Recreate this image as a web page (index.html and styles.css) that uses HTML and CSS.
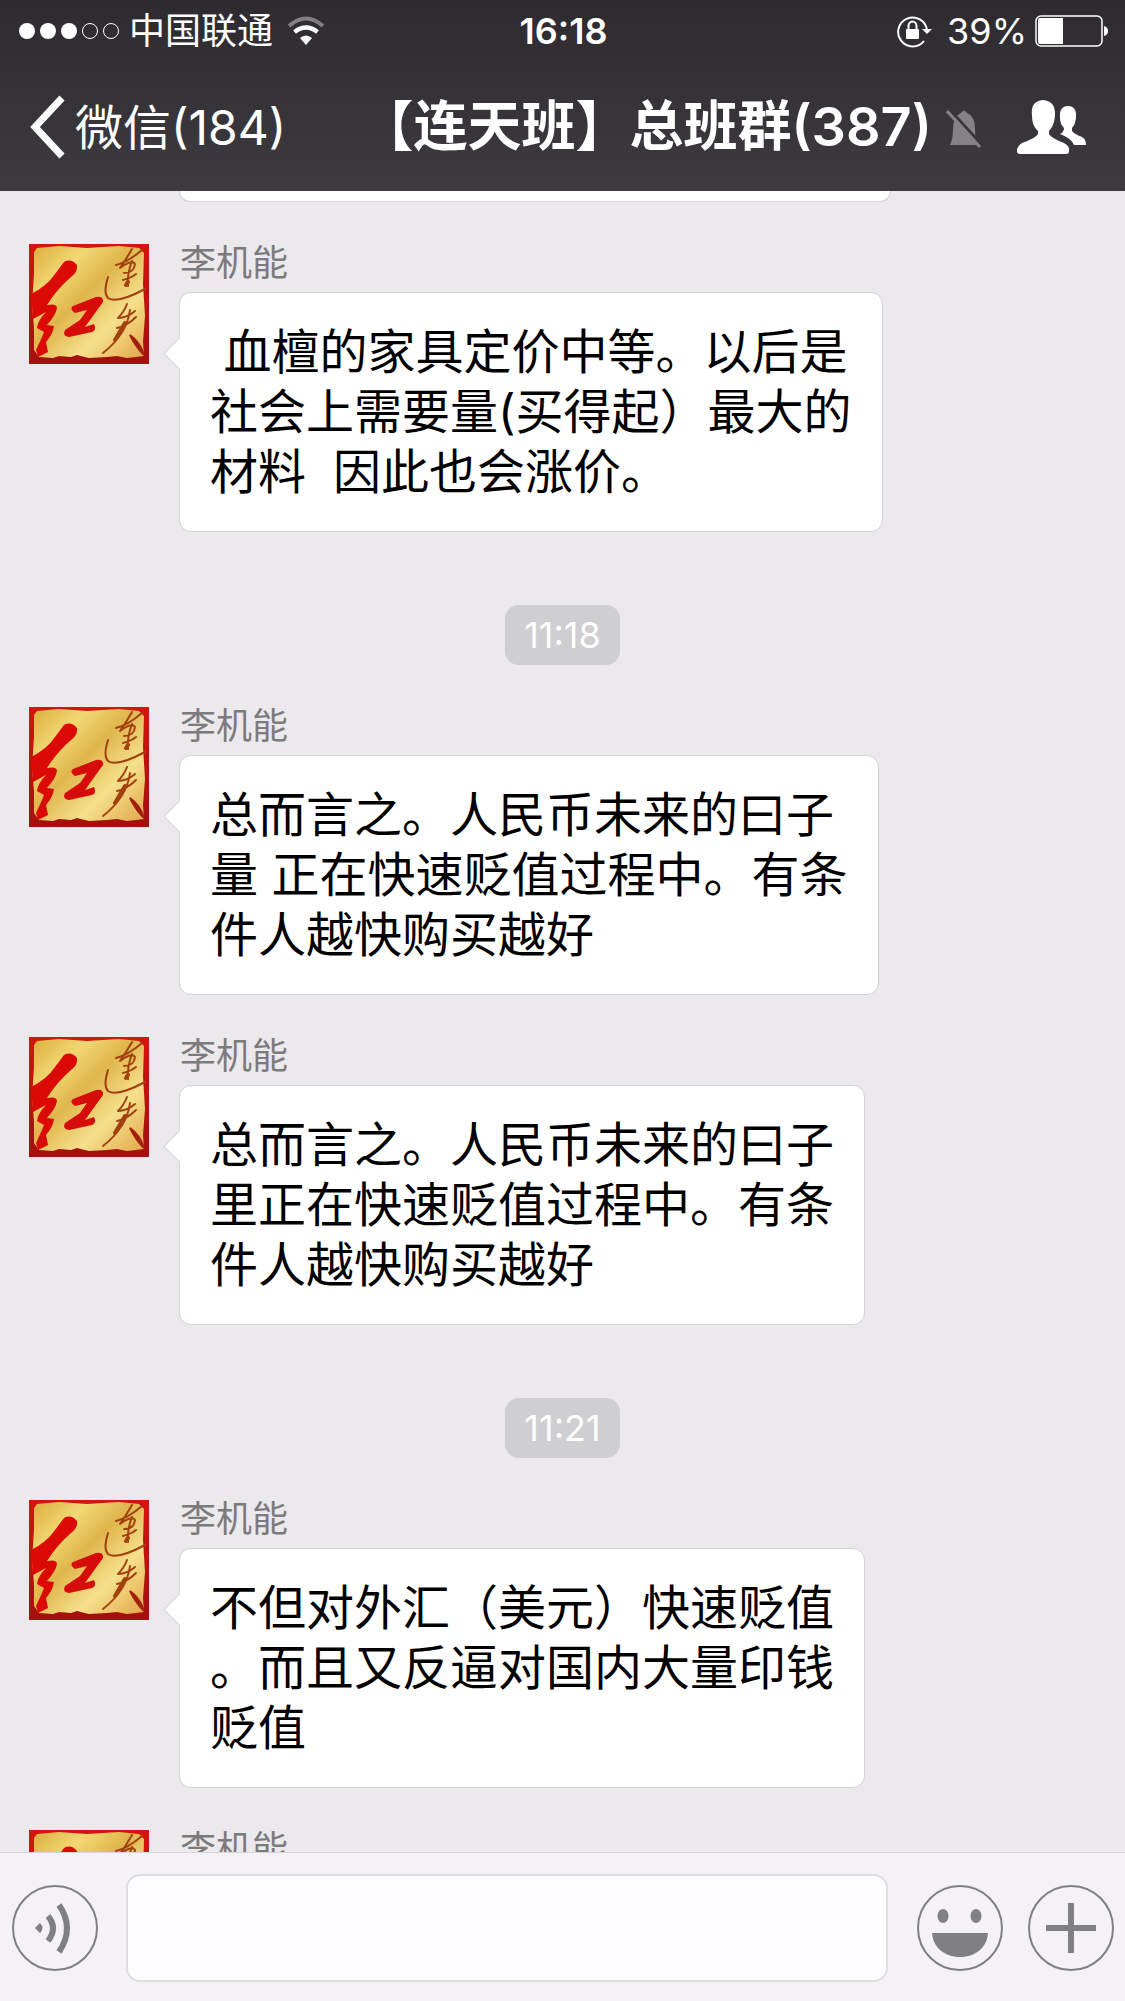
FILE: index.html
```html
<!DOCTYPE html>
<html lang="zh-CN">
<head>
<meta charset="utf-8">
<meta name="viewport" content="width=device-width, initial-scale=1">
<title>【连天班】总班群(387)</title>
<link rel="stylesheet" href="styles.css">
</head>
<body>
<svg class="sprite" aria-hidden="true">
  <defs>
    <linearGradient id="gold" x1="0" y1="0" x2="1" y2="1">
      <stop offset="0" stop-color="#dcae3c"/>
      <stop offset="0.25" stop-color="#f1d873"/>
      <stop offset="0.45" stop-color="#e0b64c"/>
      <stop offset="0.7" stop-color="#f5e08c"/>
      <stop offset="1" stop-color="#e2a648"/>
    </linearGradient>
    <linearGradient id="frame" x1="0" y1="0" x2="0" y2="1">
      <stop offset="0" stop-color="#d5150f"/>
      <stop offset="1" stop-color="#a3100d"/>
    </linearGradient>
  </defs>
  <symbol id="avatar" viewBox="0 0 120 120">
    <rect width="120" height="120" fill="url(#frame)"/>
    <path d="M8 4 L30 2 L58 4 L90 2 L110 4 L115 9 L114 40 L116 72 L114 98 L115 112 L98 114 L88 112 L78 113 L60 114 L48 111 L42 113 L30 112 L24 114 L10 113 L5 106 L5 84 L3 60 L5 30 L5 8Z" fill="url(#gold)"/>
    <path d="M35 18 Q42 14 48 21 Q49 28 42 33 Q28 45 18 61 Q28 59 28 64 Q27 71 18 81 L25 82 Q24 90 17 98 L19 108 L9 113 L7 106 L13 93 L15 88 L8 84 Q9 76 17 68 L4 75 L2 50 Q18 42 26 30Z" fill="#dc0a07"/>
    <path d="M44 62 L67 53 Q75 52 74 58 L56 83 L65 80 Q68 86 63 88 L40 93 Q33 92 36 86 L51 76 L58 66 L46 69 Q40 65 44 62Z" fill="#d50c09"/>
    <g fill="none" stroke="#a2410f" stroke-linecap="round" stroke-linejoin="round">
      <path d="M87 21 Q99 18 113 6 M103 5 Q96 17 91 24 Q103 15 106 20 Q105 29 95 29 M94 36 Q102 34 107 30 M103 17 Q98 30 99 42" stroke-width="2"/>
      <path d="M79 33 Q74 49 79 54 Q88 60 116 45" stroke-width="2"/>
      <path d="M98 60 Q95 68 89 74 Q98 74 106 67 M88 84 Q98 82 107 73 M101 66 Q98 90 74 109" stroke-width="2"/>
      <path d="M97 41 L99 38 M96 79 L86 96" stroke-width="4"/>
    </g>
    <path d="M101 91 Q111 98 115 111 Q107 103 101 91Z" fill="#a0200d" stroke="#a0200d" stroke-width="2"/>
  </symbol>
</svg>

<header class="header">
  <div class="status">
    <div class="status-side">
      <svg class="signal" viewBox="0 0 102 18" aria-hidden="true">
        <g fill="#fff"><circle cx="9" cy="9" r="8"/><circle cx="30" cy="9" r="8"/><circle cx="51" cy="9" r="8"/></g>
        <g fill="none" stroke="#fff"><circle cx="72" cy="9" r="7.5"/><circle cx="93" cy="9" r="7.5"/></g>
      </svg>
      <span class="carrier">中国联通</span>
      <svg class="wifi" viewBox="0 0 38 30" aria-hidden="true">
        <path d="M2 10 Q19 -5 36 10" fill="none" stroke="#817e84" stroke-width="4"/>
        <path d="M7.500 16 Q19 7 30.500 16" fill="none" stroke="#fff" stroke-width="4.500"/>
        <path d="M13 22 Q19 17 25 22 L19 29Z" fill="#fff"/>
      </svg>
    </div>
    <time class="clock">16:18</time>
    <div class="status-side status-right">
      <svg class="lock" viewBox="0 0 36 34" aria-hidden="true">
        <path d="M30 16 A14.500 14.500 0 1 0 27 27" fill="none" stroke="#fff" stroke-width="2"/>
        <path d="M25 15 H35 L30 20Z" fill="#fff"/>
        <rect x="9" y="15" width="13" height="10" rx="1" fill="#fff"/>
        <path d="M11.500 16 V12 A4 4.500 0 0 1 19.500 12 V16" fill="none" stroke="#fff" stroke-width="2"/>
      </svg>
      <span>39%</span>
      <svg class="battery" viewBox="0 0 74 32" aria-hidden="true">
        <rect x="1" y="1" width="66" height="30" rx="5" fill="none" stroke="#fff" stroke-width="1.500"/>
        <path d="M5 3 H28 V29 H5 Q3 29 3 27 V5 Q3 3 5 3Z" fill="#fff"/>
        <path d="M69 11 Q73 12 73 16 T69 21Z" fill="#fff"/>
      </svg>
    </div>
  </div>
  <nav class="nav">
    <a class="back" href="#">
      <svg class="chevron" viewBox="0 0 36 64" aria-hidden="true"><path d="M33 3 L6 32 L33 61" fill="none" stroke="#fff" stroke-width="7"/></svg>
      <span class="back-label">微信(184)</span>
    </a>
    <div class="heading">
      <h1 class="title">【连天班】总班群(387)</h1>
      <svg class="bell" viewBox="0 0 36 40" aria-label="消息免打扰">
        <path d="M4 36 Q7 30 7 20 Q7 7 15 4 Q18 -1 21 4 Q29 7 29 20 Q29 31 32 36Z" fill="#858287"/>
        <path d="M3 0 L36 36" stroke="#39363b" stroke-width="3"/>
        <path d="M1 2 L34 38" stroke="#858287" stroke-width="3"/>
      </svg>
    </div>
    <button class="members" type="button" aria-label="群成员">
      <svg viewBox="0 0 70 54" aria-hidden="true"><g fill="#fff">
        <path d="M51 6 Q60 6 59 18 Q58 25 55 28 V31 Q57 34 65 37 Q69 39 69 45 H57 Q54 38 43 34 Q47 32 47 28 Q43 24 43 18 Q42 6 51 6Z"/>
        <path d="M26 0 Q39 1 38 16 Q37 26 32 31 V34 Q34 38 47 43 Q53 46 52 51 Q52 54 49 54 H3 Q0 54 0 51 Q0 46 5 43 Q19 38 21 34 V31 Q15 26 15 16 Q13 1 26 0Z"/>
      </g></svg>
    </button>
  </nav>
</header>

<main class="chat">
  <div class="bubble bubble-cut"></div>

  <article class="message">
    <svg class="avatar" aria-hidden="true"><use href="#avatar"/></svg>
    <div class="content">
      <div class="name">李机能</div>
      <p class="bubble bubble-tail"> 血檀的家具定价中等。以后是<br>社会上需要量(买得起）最大的<br>材料  因此也会涨价。</p>
    </div>
  </article>

  <time class="stamp">11:18</time>

  <article class="message">
    <svg class="avatar" aria-hidden="true"><use href="#avatar"/></svg>
    <div class="content">
      <div class="name">李机能</div>
      <p class="bubble bubble-tail">总而言之。人民币未来的曰子<br>量 正在快速贬值过程中。有条<br>件人越快购买越好</p>
    </div>
  </article>

  <article class="message">
    <svg class="avatar" aria-hidden="true"><use href="#avatar"/></svg>
    <div class="content">
      <div class="name">李机能</div>
      <p class="bubble bubble-tail">总而言之。人民币未来的曰子<br>里正在快速贬值过程中。有条<br>件人越快购买越好</p>
    </div>
  </article>

  <time class="stamp">11:21</time>

  <article class="message">
    <svg class="avatar" aria-hidden="true"><use href="#avatar"/></svg>
    <div class="content">
      <div class="name">李机能</div>
      <p class="bubble bubble-tail">不但对外汇（美元）快速贬值<br>。而且又反逼对国内大量印钱<br>贬值</p>
    </div>
  </article>

  <article class="message">
    <svg class="avatar" aria-hidden="true"><use href="#avatar"/></svg>
    <div class="content">
      <div class="name">李机能</div>
    </div>
  </article>
</main>

<footer class="composer">
  <button class="tool" type="button" aria-label="语音">
    <svg viewBox="0 0 86 86" aria-hidden="true">
      <circle cx="43" cy="43" r="42" fill="none" stroke="#808084" stroke-width="2"/>
      <path d="M23 43 L28 38 Q33 43 28 48Z" fill="#808084"/>
      <path d="M36 31 Q46 43 36 56 M47 20 Q63 43 47 67" fill="none" stroke="#808084" stroke-width="6"/>
    </svg>
  </button>
  <input class="field" type="text" aria-label="消息">
  <button class="tool" type="button" aria-label="表情">
    <svg viewBox="0 0 86 86" aria-hidden="true">
      <circle cx="43" cy="43" r="42" fill="none" stroke="#808084" stroke-width="2"/>
      <g fill="#808084"><ellipse cx="26" cy="31" rx="5.500" ry="7"/><ellipse cx="59" cy="31" rx="5.500" ry="7"/>
      <path d="M15 48 H71 C70 62 59 72 43 72 S16 62 15 48Z"/></g>
    </svg>
  </button>
  <button class="tool" type="button" aria-label="更多">
    <svg viewBox="0 0 86 86" aria-hidden="true">
      <circle cx="43" cy="43" r="42" fill="none" stroke="#808084" stroke-width="2"/>
      <path d="M43 18 V68 M18 43 H68" stroke="#808084" stroke-width="6"/>
    </svg>
  </button>
</footer>
</body>
</html>
```
FILE: styles.css
```css
* { box-sizing: border-box; }

body {
  margin: 0;
  height: 100vh;
  display: flex;
  flex-direction: column;
  overflow: hidden;
  background: #ebe9ec;
  color: #000;
  font-family: Inter, "Noto Sans CJK SC", sans-serif;
  font-size: 48px;
}

svg { display: block; flex: none; }
button { padding: 0; border: 0; background: none; flex: none; }
.sprite { position: absolute; width: 0; height: 0; }

.header {
  flex: none;
  background: linear-gradient(#2d2a30, #3e3b40);
  color: #fff;
}

.status {
  display: grid;
  grid-template-columns: 1fr auto 1fr;
  align-items: center;
  height: 62px;
  padding: 0 16px 0 18px;
  font-size: 36px;
  line-height: 48px;
}
.status-side { display: flex; align-items: center; }
.status-right { justify-content: flex-end; gap: 8px; }
.signal { width: 102px; height: 18px; }
.carrier { margin: 0 14px 0 9px; }
.wifi { width: 38px; height: 30px; }
.clock { font-weight: 600; }
.lock { width: 36px; height: 34px; margin-right: 6px; }
.battery { width: 74px; height: 32px; }

.nav {
  display: flex;
  align-items: center;
  justify-content: space-between;
  height: 129px;
  padding: 0 38px 0 29px;
}
.back {
  display: flex;
  align-items: center;
  gap: 10px;
  color: #fff;
  text-decoration: none;
}
.back-label { padding-bottom: 5px; }
.chevron { width: 36px; height: 64px; }
.heading { display: flex; align-items: center; gap: 14px; margin-left: 38px; }
.title {
  margin: 0;
  font-size: 54px;
  font-weight: 600;
  font-optical-sizing: none;
  line-height: 72px;
  white-space: nowrap;
}
.bell { width: 36px; height: 40px; margin-top: 4px; }
.members svg { width: 70px; height: 54px; }

.chat {
  flex: 1;
  min-height: 0;
  overflow: hidden;
  display: flex;
  flex-direction: column;
  gap: 42px;
  padding: 0 29px;
}
.chat > * { flex: none; }

.message { display: flex; gap: 30px; }
.avatar { width: 120px; height: 120px; }
.name { height: 48px; padding-left: 1px; font-size: 36px; line-height: 38px; color: #7b7a7d; }

.bubble {
  position: relative;
  width: fit-content;
  margin: 0;
  padding: 29px 30px;
  border: 1px solid #d3d2d5;
  border-radius: 12px;
  background: #fff;
  line-height: 60px;
  white-space: pre;
}
.bubble-cut {
  width: 712px;
  height: 11px;
  margin-left: 150px;
  padding: 0;
  border-top: 0;
  border-radius: 0 0 12px 12px;
}
.bubble-tail::before {
  content: "";
  position: absolute;
  left: -12px;
  top: 49px;
  width: 22px;
  height: 22px;
  border: solid #d3d2d5;
  border-width: 0 0 1px 1px;
  background: #fff;
  transform: rotate(45deg);
}

.stamp {
  align-self: center;
  margin-top: 31px;
  padding: 0 19px;
  border-radius: 14px;
  background: #cfced1;
  color: #fff;
  font-size: 36px;
  line-height: 60px;
}

.composer {
  flex: none;
  display: flex;
  align-items: center;
  gap: 25px;
  padding: 21px 11px 19px 12px;
  border-top: 1px solid #d6d5d8;
  background: #f4f2f6;
}
.tool svg { width: 86px; height: 86px; }
.field {
  flex: 1;
  min-width: 0;
  height: 108px;
  margin: 0 4px 0 3px;
  padding: 0 24px;
  border: 2px solid #dddce0;
  border-radius: 14px;
  background: #fdfcfe;
  font: inherit;
}
```
